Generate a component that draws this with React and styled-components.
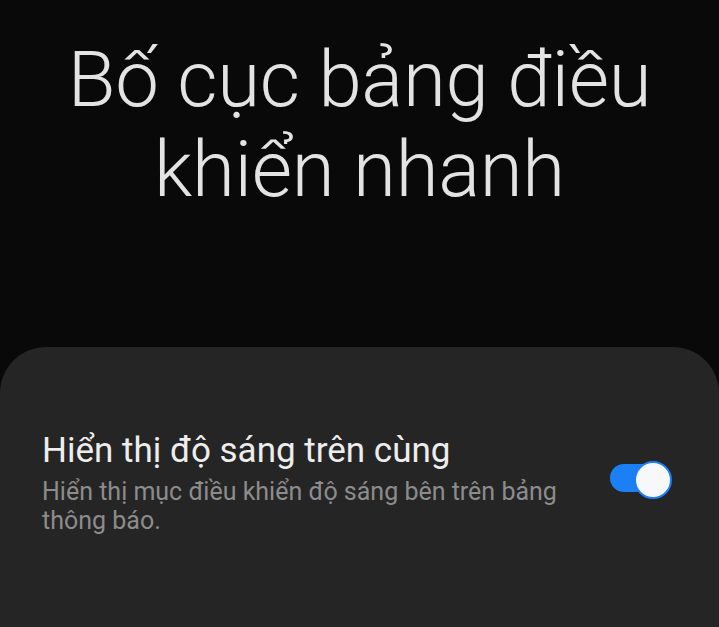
import React from "react";
import styled, { createGlobalStyle } from "styled-components";

// ------------ Variables -------------------
const color_bg = "#090909";
const color_card = "#252525";
const color_title = "#e3e3e3";
const color_text = "#ededed";
const color_sub = "#8c8c8c";
const color_blue = "#1b7ff6";
// ----- end of Variables -------------------

const GlobalStyle = createGlobalStyle`
  html, body {
    margin: 0;
    padding: 0;
    background: ${color_bg};
    font-family: Roboto, "Noto Sans", sans-serif;
  }
  #root {
    min-height: 100vh;
  }
`;

// --------------- Styles -------------------
const Page = styled.div`
  box-sizing: border-box;
  height: 627px;
  overflow: hidden;
  display: flex;
  flex-direction: column;
  background: ${color_bg};
`;

const Header = styled.h1`
  margin: 0;
  height: 347px;
  box-sizing: border-box;
  padding-top: 35px;
  text-align: center;
  font-weight: 300;
  font-size: 78px;
  line-height: 90px;
  color: ${color_title};
  letter-spacing: -0.3px;
`;

const Card = styled.div`
  flex: 1;
  background: ${color_card};
  border-radius: 46px 46px 0 0;
  padding: 83px 51px 0 42px;
`;

const Row = styled.div`
  display: flex;
  align-items: flex-start;
  gap: 40px;
`;

const Texts = styled.div`
  flex: 1;
`;

const Title = styled.div`
  font-size: 35px;
  line-height: 42px;
  color: ${color_text};
`;

const Sub = styled.div`
  margin-top: 5px;
  font-size: 25px;
  line-height: 29px;
  color: ${color_sub};
`;

const Toggle = styled.div`
  position: relative;
  width: 58px;
  height: 28px;
  border-radius: 14px;
  background: ${(p) => (p.$on ? color_blue : "#555")};
  margin-top: 34px;
  flex-shrink: 0;

  &::after {
    content: "";
    position: absolute;
    box-sizing: border-box;
    top: -3px;
    left: ${(p) => (p.$on ? "24px" : "-4px")};
    width: 38px;
    height: 38px;
    border-radius: 50%;
    background: #f7f8fa;
    border: 2px solid ${color_blue};
  }
`;
// -------- end of Styles -------------------

export default function App() {
  return (
    <>
      <GlobalStyle />
      <Page>
        <Header>
          Bố cục bảng điều
          <br />
          khiển nhanh
        </Header>
        <Card>
          <Row>
            <Texts>
              <Title>Hiển thị độ sáng trên cùng</Title>
              <Sub>Hiển thị mục điều khiển độ sáng bên trên bảng thông báo.</Sub>
            </Texts>
            <Toggle $on />
          </Row>
        </Card>
      </Page>
    </>
  );
}
